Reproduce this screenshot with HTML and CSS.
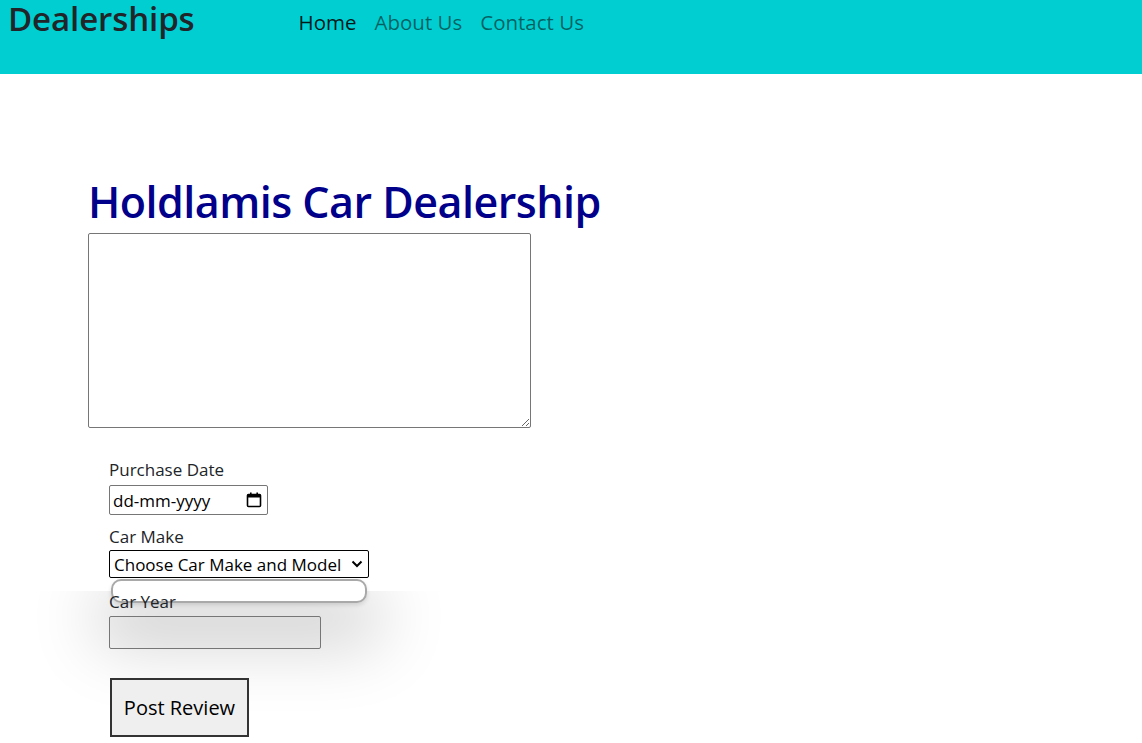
FILE: index.html
```html
<!DOCTYPE html>
<html lang="en">
<head>
<meta charset="utf-8">
<title>Dealerships</title>
<link rel="stylesheet" href="styles.css">
</head>
<body>
<header class="navbar">
  <div class="brand">Dealerships</div>
  <nav class="nav">
    <a class="nav-link active" href="#">Home</a>
    <a class="nav-link" href="#">About Us</a>
    <a class="nav-link" href="#">Contact Us</a>
  </nav>
</header>
<main class="main">
  <h1 class="title">Holdlamis Car Dealership</h1>
  <textarea class="review-text"></textarea>
  <div class="form-area">
    <div class="shadow-clip"><div class="shadow-src"></div></div>
    <label class="field-label first">Purchase Date</label>
    <div class="date-input">
      <span class="date-text">dd-mm-yyyy</span>
      <svg class="cal-icon" width="16" height="16" viewBox="0 0 16 16"><rect x="1.5" y="2.5" width="13" height="12" rx="1" fill="none" stroke="#000" stroke-width="1.6"/><rect x="1.5" y="2.5" width="13" height="3" fill="#000"/><rect x="4" y="0.5" width="1.6" height="3" fill="#000"/><rect x="10.4" y="0.5" width="1.6" height="3" fill="#000"/></svg>
    </div>
    <label class="field-label">Car Make</label>
    <div class="select-box">
      <span class="select-text">Choose Car Make and Model</span>
      <svg class="chev" width="12" height="8" viewBox="0 0 12 8"><path d="M1.5 1.5 L6 6 L10.5 1.5" fill="none" stroke="#000" stroke-width="2"/></svg>
    </div>
    <div class="floating-box"></div>
    <label class="field-label year">Car Year</label>
    <div class="year-input"></div>
    <button class="post-btn">Post Review</button>
  </div>
</main>
</body>
</html>
```
FILE: styles.css
```css
html, body {
  margin: 0;
  padding: 0;
  background: #fff;
  font-family: "Open Sans", "Noto Sans", sans-serif;
}

.navbar {
  background: #00ced1;
  height: 74px;
  display: flex;
  align-items: flex-start;
  padding: 0 0 0 8px;
  box-sizing: border-box;
}

.brand {
  font-size: 33px;
  font-weight: 600;
  color: #212529;
  line-height: 38px;
  margin-top: 0;
  letter-spacing: -0.1px;
}

.nav {
  display: flex;
  gap: 18px;
  margin-left: 104px;
  margin-top: 8px;
}

.nav-link {
  font-size: 20.5px;
  line-height: 28px;
  color: rgba(0, 0, 0, 0.55);
  text-decoration: none;
}

.nav-link.active {
  color: rgba(0, 0, 0, 0.9);
}

.main {
  padding: 96px 0 0 88px;
}

.title {
  margin: 0;
  font-size: 43px;
  font-weight: 600;
  line-height: 63px;
  color: #00008b;
  letter-spacing: -0.5px;
}

.review-text {
  display: block;
  width: 443px;
  height: 195px;
  box-sizing: border-box;
  border: 1px solid #767676;
  border-radius: 2px;
  margin: 0;
  padding: 2px;
  resize: both;
}

.form-area {
  position: relative;
  padding-left: 21px;
  display: flex;
  flex-direction: column;
  align-items: flex-start;
}

.shadow-clip {
  position: absolute;
  left: -88px;
  top: 163px;
  width: 600px;
  height: 160px;
  overflow: hidden;
  pointer-events: none;
  z-index: 0;
}

.shadow-src {
  position: absolute;
  left: 111px;
  top: -12px;
  width: 256px;
  height: 24px;
  border-radius: 10px;
  box-shadow: 0 26px 66px 18px rgba(0, 0, 0, 0.17);
}

.field-label {
  position: relative;
  z-index: 2;
  font-size: 17px;
  line-height: 22px;
  color: #212529;
  margin-top: 11px;
}

.field-label.first {
  margin-top: 31px;
}

.field-label.year {
  margin-top: 13px;
}

.date-input {
  margin-top: 4px;
  width: 159px;
  height: 30px;
  box-sizing: border-box;
  border: 1px solid #767676;
  border-radius: 2px;
  display: flex;
  align-items: center;
  justify-content: space-between;
  padding: 0 5px 0 3px;
  background: #fff;
}

.date-text {
  font-size: 17px;
  color: #000;
}

.cal-icon {
  display: block;
}

.select-box {
  margin-top: 2px;
  width: 260px;
  height: 28px;
  box-sizing: border-box;
  border: 1px solid #000;
  border-radius: 2px;
  display: flex;
  align-items: center;
  justify-content: space-between;
  padding: 0 5px 0 4px;
  background: #fff;
}

.select-text {
  font-size: 17px;
  color: #000;
  white-space: nowrap;
}

.chev {
  display: block;
}

.floating-box {
  position: absolute;
  left: 23px;
  top: 151px;
  width: 256px;
  height: 24px;
  box-sizing: border-box;
  border: 2px solid #a9a9a9;
  border-radius: 10px;
  background: #fff;
  box-shadow: 0 2px 4px rgba(0, 0, 0, 0.12);
  z-index: 1;
}

.year-input {
  position: relative;
  z-index: 2;
  margin-top: 3px;
  width: 212px;
  height: 33px;
  box-sizing: border-box;
  border: 1px solid #767676;
  border-radius: 2px;
  background: rgba(0, 0, 0, 0.02);
}

.post-btn {
  position: relative;
  z-index: 2;
  margin: 29px 0 0 1px;
  width: 139px;
  height: 59px;
  box-sizing: border-box;
  border: 2px solid #333;
  background: #efefef;
  font-family: "Open Sans", "Noto Sans", sans-serif;
  font-size: 20px;
  color: #000;
  padding: 0;
}
```
